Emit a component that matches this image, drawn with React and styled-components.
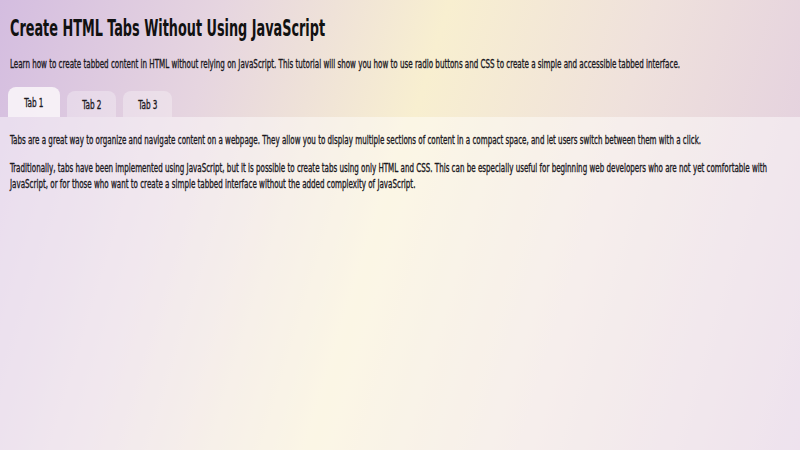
import styled, { createGlobalStyle, css } from 'styled-components';
import { useState } from 'react';

const BODY_SQUEEZE = 0.645;
const TITLE_SQUEEZE = 0.62;

const narrow = (k) => css`
  transform: scaleX(${k});
  transform-origin: left center;
  width: calc(100% / ${k});
`;

const GlobalStyle = createGlobalStyle`
  html, body {
    margin: 0;
    height: 100%;
  }
  body {
    font-family: "DejaVu Sans Condensed", "DejaVu Sans", sans-serif;
    font-stretch: condensed;
    color: #1b191e;
    background: linear-gradient(107deg, #d4bde0 0%, #e6d5e0 24%, #f8efd0 48%, #efe1dc 70%, #e0cbe0 100%);
    min-height: 100vh;
    overflow: hidden;
  }
`;

const Page = styled.div`
  min-height: 100vh;
  display: flex;
  flex-direction: column;
`;

const Header = styled.header`
  padding: 14px 10px 0;
`;

const Title = styled.h1`
  ${narrow(TITLE_SQUEEZE)};
  margin: 0;
  font-size: 23px;
  font-weight: 700;
  line-height: 28px;
  color: #111;
`;

const Lead = styled.p`
  ${narrow(BODY_SQUEEZE)};
  margin: 14px 0 0;
  font-size: 12.3px;
  line-height: 16px;
  -webkit-text-stroke: 0.35px currentColor;
`;

const TabBar = styled.div`
  display: flex;
  align-items: flex-end;
  gap: 7px;
  padding: 15px 8px 0;
`;

const Tab = styled.label`
  display: flex;
  align-items: center;
  justify-content: center;
  width: ${(p) => p.$width}px;
  height: ${(p) => (p.$active ? 30 : 26)}px;
  box-sizing: border-box;
  border-radius: 8px 8px 0 0;
  cursor: pointer;
  background: ${(p) => (p.$active ? 'rgba(248, 244, 248, 0.9)' : 'rgba(255, 255, 255, 0.3)')};
  input {
    display: none;
  }
`;

const TabText = styled.span`
  display: inline-block;
  font-size: 12.6px;
  transform: scaleX(${BODY_SQUEEZE});
  -webkit-text-stroke: 0.35px currentColor;
  white-space: nowrap;
`;

const Panel = styled.section`
  flex: 1;
  padding: 15px 10px;
  background: rgba(255, 255, 255, 0.45);
`;

const Para = styled.p`
  ${narrow(BODY_SQUEEZE)};
  margin: 0 0 12px;
  font-size: 12.3px;
  line-height: 16px;
  -webkit-text-stroke: 0.35px currentColor;
`;

const tabs = [
  {
    label: 'Tab 1',
    width: 52,
    body: [
      'Tabs are a great way to organize and navigate content on a webpage. They allow you to display multiple sections of content in a compact space, and let users switch between them with a click.',
      'Traditionally, tabs have been implemented using JavaScript, but it is possible to create tabs using only HTML and CSS. This can be especially useful for beginning web developers who are not yet comfortable with JavaScript, or for those who want to create a simple tabbed interface without the added complexity of JavaScript.',
    ],
  },
  { label: 'Tab 2', width: 49, body: ['Radio buttons keep track of which tab is open.'] },
  { label: 'Tab 3', width: 49, body: ['The :checked selector shows the matching panel.'] },
];

export default function App() {
  const [current, setCurrent] = useState(0);

  return (
    <Page>
      <GlobalStyle />
      <Header>
        <Title>Create HTML Tabs Without Using JavaScript</Title>
        <Lead>
          Learn how to create tabbed content in HTML without relying on JavaScript. This tutorial will show you how to use radio buttons and CSS to create a simple and accessible tabbed interface.
        </Lead>
      </Header>
      <TabBar>
        {tabs.map((t, i) => (
          <Tab key={t.label} $width={t.width} $active={i === current}>
            <input type="radio" name="tabs" checked={i === current} onChange={() => setCurrent(i)} />
            <TabText>{t.label}</TabText>
          </Tab>
        ))}
      </TabBar>
      <Panel>
        {tabs[current].body.map((text) => (
          <Para key={text}>{text}</Para>
        ))}
      </Panel>
    </Page>
  );
}
